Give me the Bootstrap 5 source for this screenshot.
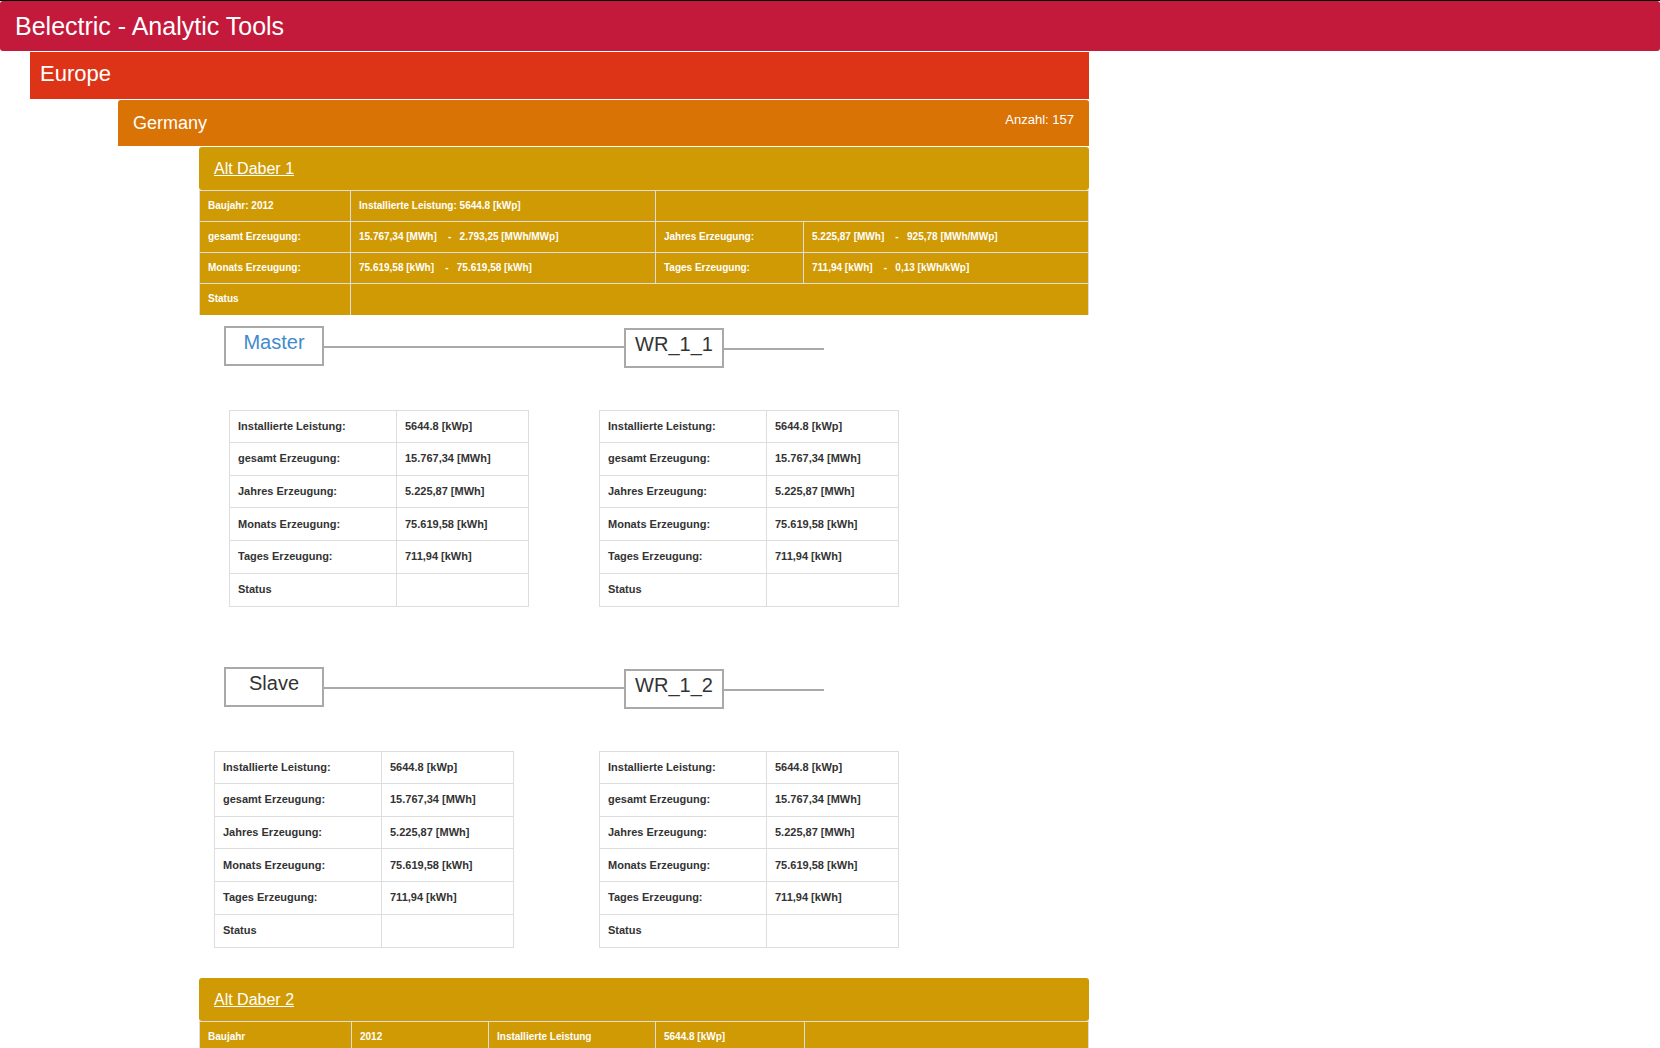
<!DOCTYPE html>
<html lang="de">
<head>
<meta charset="utf-8">
<meta name="viewport" content="width=device-width, initial-scale=1">
<title>Belectric - Analytic Tools</title>
<link href="https://cdn.jsdelivr.net/npm/bootstrap@5.3.0/dist/css/bootstrap.min.css" rel="stylesheet">
<style>
  body { font-family: "Liberation Sans", Arial, sans-serif; color: #333; background: #fff; line-height: 20px; }
  h1, h2, h3, h4 { font-weight: 400; }
  .page-top { border-top: 1px solid #000; }
  .bar { color: #fff; border-radius: 3px; margin-bottom: 1px; }
  .bar-app { background: #c3193b; padding: 10px 15px; font-size: 25px; line-height: 30px; }
  .bar-continent { background: #dd3418; padding: 10px 10px 13px; font-size: 22px; line-height: 24px; border-radius: 0; }
  .bar-country { background: #d97306; padding: 10px 15px; border-radius: 3px 3px 0 0; }
  .bar-country h3 { font-size: 18px; line-height: 26px; }
  .bar-country .total { font-size: 13px; line-height: 20px; }
  .bar-plant { background: #cf9a04; padding: 10px 15px; margin-bottom: 0; font-size: 16px; line-height: 23px; }
  .bar-next { margin-top: 30px; }
  .tree { max-width: 1089px; padding-left: 30px; }
  .country { padding-left: 88px; }
  .plant { padding-left: 81px; }

  .plant-data, .unit-data { table-layout: fixed; margin: 0; font-weight: 700; border-collapse: collapse; }
  .plant-data th, .plant-data td, .unit-data th, .unit-data td { border: 1px solid #ddd; padding: 7px 8px; white-space: nowrap; vertical-align: middle; text-align: left; }
  .plant-data { width: 100%; background: #cf9a04; color: #fff; font-size: 10px; line-height: 14px; }
  .plant-data tr { height: 31px; }
  .plant-data tr:last-child > * { border-bottom: 0; }
  .unit-data { width: 300px; height: 197px; font-size: 11px; line-height: 15px; }
  .unit-data th { width: 167px; }

  .string { padding: 11px 0 0 25px; }
  .values + .string { padding-top: 60px; }
  .unit { width: 100px; height: 40px; border: 2px solid #a9a9a9; font-size: 20px; line-height: 28px; text-align: center; }
  .unit a { color: #428bca; }
  .unit-sub { margin-top: 2px; }
  .wire { height: 2px; background: #a9a9a9; margin-top: 20px; }
  .wire-long { width: 300px; }
  .wire-short { width: 100px; }
  .unit-sub + .wire { margin-top: 22px; }
  .values { padding-top: 42px; }
  .values > div { width: 400px; }
  .values .first { padding-left: 30px; }
  .values .second { padding-left: 15px; }
</style>
<script src="https://cdn.jsdelivr.net/npm/bootstrap@5.3.0/dist/js/bootstrap.bundle.min.js"></script>
</head>
<body class="vh-100 overflow-hidden">
<header class="page-top">
  <h1 class="bar bar-app">Belectric - Analytic Tools</h1>
</header>

<main class="tree">
  <h2 class="bar bar-continent">Europe</h2>

  <section class="country">
    <div class="bar bar-country d-flex justify-content-between align-items-start">
      <h3 class="m-0">Germany</h3>
      <span class="total">Anzahl: 157</span>
    </div>

    <div class="plant">
      <h4 class="bar bar-plant"><a class="text-white" href="#alt-daber-1">Alt Daber 1</a></h4>
      <table class="plant-data" id="alt-daber-1">
        <colgroup><col style="width:151px"><col style="width:305px"><col style="width:148px"><col></colgroup>
        <tbody>
          <tr><th>Baujahr: 2012</th><td>Installierte Leistung: 5644.8 [kWp]</td><td colspan="2"></td></tr>
          <tr><th>gesamt Erzeugung:</th><td>15.767,34 [MWh]&nbsp;&nbsp;&nbsp; -&nbsp;&nbsp; 2.793,25 [MWh/MWp]</td><th>Jahres Erzeugung:</th><td>5.225,87 [MWh]&nbsp;&nbsp;&nbsp; -&nbsp;&nbsp; 925,78 [MWh/MWp]</td></tr>
          <tr><th>Monats Erzeugung:</th><td>75.619,58 [kWh]&nbsp;&nbsp;&nbsp; -&nbsp;&nbsp; 75.619,58 [kWh]</td><th>Tages Erzeugung:</th><td>711,94 [kWh]&nbsp;&nbsp;&nbsp; -&nbsp;&nbsp; 0,13 [kWh/kWp]</td></tr>
          <tr><th>Status</th><td colspan="3"></td></tr>
        </tbody>
      </table>

      <div class="string d-flex align-items-start">
        <div class="unit"><a class="text-decoration-none" href="#master">Master</a></div>
        <div class="wire wire-long"></div>
        <div class="unit unit-sub">WR_1_1</div>
        <div class="wire wire-short"></div>
      </div>
      <div class="values d-flex">
        <div class="first">
          <table class="unit-data" id="master"><tbody>
            <tr><th>Installierte Leistung:</th><td>5644.8 [kWp]</td></tr>
            <tr><th>gesamt Erzeugung:</th><td>15.767,34 [MWh]</td></tr>
            <tr><th>Jahres Erzeugung:</th><td>5.225,87 [MWh]</td></tr>
            <tr><th>Monats Erzeugung:</th><td>75.619,58 [kWh]</td></tr>
            <tr><th>Tages Erzeugung:</th><td>711,94 [kWh]</td></tr>
            <tr><th>Status</th><td></td></tr>
          </tbody></table>
        </div>
        <div>
          <table class="unit-data"><tbody>
            <tr><th>Installierte Leistung:</th><td>5644.8 [kWp]</td></tr>
            <tr><th>gesamt Erzeugung:</th><td>15.767,34 [MWh]</td></tr>
            <tr><th>Jahres Erzeugung:</th><td>5.225,87 [MWh]</td></tr>
            <tr><th>Monats Erzeugung:</th><td>75.619,58 [kWh]</td></tr>
            <tr><th>Tages Erzeugung:</th><td>711,94 [kWh]</td></tr>
            <tr><th>Status</th><td></td></tr>
          </tbody></table>
        </div>
      </div>

      <div class="string d-flex align-items-start">
        <div class="unit">Slave</div>
        <div class="wire wire-long"></div>
        <div class="unit unit-sub">WR_1_2</div>
        <div class="wire wire-short"></div>
      </div>
      <div class="values d-flex">
        <div class="second">
          <table class="unit-data"><tbody>
            <tr><th>Installierte Leistung:</th><td>5644.8 [kWp]</td></tr>
            <tr><th>gesamt Erzeugung:</th><td>15.767,34 [MWh]</td></tr>
            <tr><th>Jahres Erzeugung:</th><td>5.225,87 [MWh]</td></tr>
            <tr><th>Monats Erzeugung:</th><td>75.619,58 [kWh]</td></tr>
            <tr><th>Tages Erzeugung:</th><td>711,94 [kWh]</td></tr>
            <tr><th>Status</th><td></td></tr>
          </tbody></table>
        </div>
        <div>
          <table class="unit-data"><tbody>
            <tr><th>Installierte Leistung:</th><td>5644.8 [kWp]</td></tr>
            <tr><th>gesamt Erzeugung:</th><td>15.767,34 [MWh]</td></tr>
            <tr><th>Jahres Erzeugung:</th><td>5.225,87 [MWh]</td></tr>
            <tr><th>Monats Erzeugung:</th><td>75.619,58 [kWh]</td></tr>
            <tr><th>Tages Erzeugung:</th><td>711,94 [kWh]</td></tr>
            <tr><th>Status</th><td></td></tr>
          </tbody></table>
        </div>
      </div>

      <h4 class="bar bar-plant bar-next"><a class="text-white" href="#alt-daber-2">Alt Daber 2</a></h4>
      <table class="plant-data" id="alt-daber-2">
        <colgroup><col style="width:152px"><col style="width:137px"><col style="width:167px"><col style="width:149px"><col></colgroup>
        <tbody>
          <tr><th>Baujahr</th><td>2012</td><th>Installierte Leistung</th><td>5644.8 [kWp]</td><td></td></tr>
        </tbody>
      </table>
    </div>
  </section>
</main>
</body>
</html>
